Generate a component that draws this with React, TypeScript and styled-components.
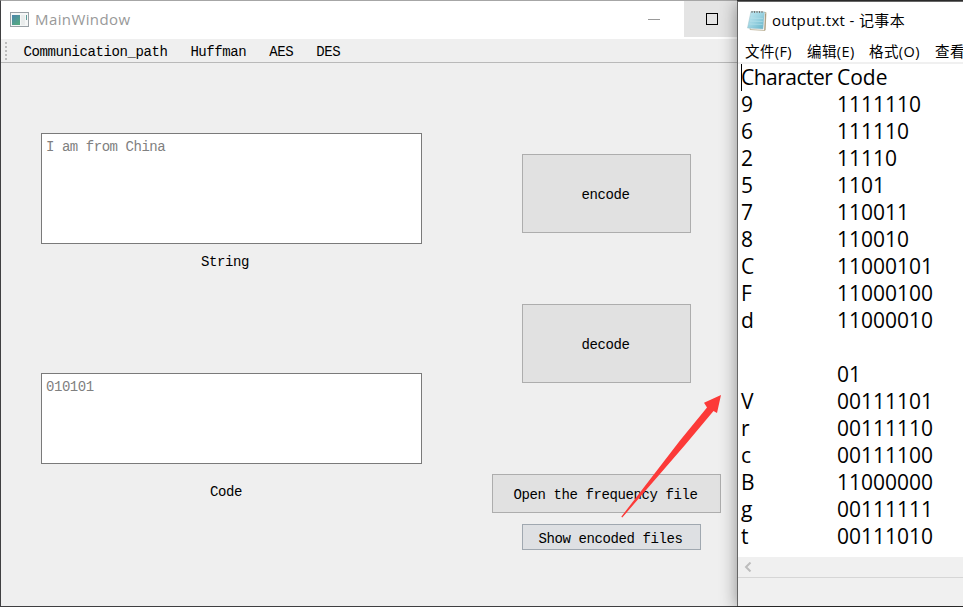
import React from "react";
import styled, { createGlobalStyle } from "styled-components";

const GlobalStyle = createGlobalStyle`
  * { box-sizing: border-box; }
  body { margin: 0; background: #333; overflow: hidden; }
`;

const mono = `"Liberation Mono", "Noto Sans CJK SC", monospace`;
const sans = `"Open Sans", "Noto Sans CJK SC", sans-serif`;

const Desktop = styled.div`
  display: flex;
  width: 963px;
  height: 607px;
  overflow: hidden;
`;

const MainWindow = styled.section`
  display: flex;
  flex-direction: column;
  width: 737px;
  height: 607px;
  flex: none;
  position: relative;
  background: #efefef;
  border: 1px solid #3f3f41;
  border-top-color: #a6a6a6;
  border-right: 0;
`;

const TitleBar = styled.header`
  display: flex;
  align-items: center;
  height: 38px;
  flex: none;
  padding-left: 9px;
  background: #fff;
  color: #999;
  font: 15px/38px ${sans};
`;

const Title = styled.span`
  margin: -2px auto 0 5px;
  letter-spacing: 0.4px;
`;

const Caption = styled.div<{ $active?: boolean }>`
  display: flex;
  align-items: center;
  justify-content: center;
  align-self: flex-start;
  width: ${(p) => (p.$active ? 53 : 60)}px;
  height: 36px;
  padding-left: ${(p) => (p.$active ? 2 : 0)}px;
  background: ${(p) => (p.$active ? "#e4e4e4" : "#fff")};
`;

const MenuBar = styled.nav`
  display: flex;
  align-items: center;
  height: 24px;
  flex: none;
  border-bottom: 1px solid #b9b9b9;
  font: 14px/16px ${mono};
  letter-spacing: -0.402px;
`;

const Grip = styled.span`
  width: 2px;
  height: 18px;
  margin: 1px 16px 0 4px;
  background: repeating-linear-gradient(#bcbcbc 0 2px, transparent 2px 4px);
`;

const MenuItem = styled.span`
  margin: 2px 22.6px 0 0.4px;
`;

const Body = styled.main`
  display: flex;
  flex: 1;
  min-height: 0;
  padding-left: 40px;
`;

const Fields = styled.div`
  display: flex;
  flex-direction: column;
  width: 381px;
  padding-top: 70px;
`;

const TextBox = styled.div<{ $h: number }>`
  height: ${(p) => p.$h}px;
  padding: 5px 4px 4px;
  border: 1px solid #7a7a7a;
  background: #fff;
  color: #808080;
  font: 14px/16px ${mono};
  letter-spacing: -0.45px;
`;

const Label = styled.div<{ $top: number; $bottom?: number; $left: number }>`
  margin: ${(p) => p.$top}px 0 ${(p) => p.$bottom ?? 0}px ${(p) => p.$left}px;
  font: 14px/16px ${mono};
  letter-spacing: -0.402px;
`;

const Actions = styled.div`
  display: flex;
  flex-direction: column;
  padding: 91px 0 0 100px;
`;

const Button = styled.button<{ $w: number; $h: number; $left?: number; $gap?: number; $hot?: boolean }>`
  width: ${(p) => p.$w}px;
  height: ${(p) => p.$h}px;
  flex: none;
  margin: 0 0 ${(p) => p.$gap ?? 0}px ${(p) => p.$left ?? 0}px;
  padding: ${(p) => (p.$hot ? 4 : 2)}px 2px 0 0;
  border: 1px solid ${(p) => (p.$hot ? "#a0a8b0" : "#adadad")};
  background: ${(p) => (p.$hot ? "#dee0e3" : "#e1e1e1")};
  color: #000;
  font: 14px/16px ${mono};
  letter-spacing: -0.402px;
`;

const Arrow = styled.svg`
  position: absolute;
  left: 619px;
  top: 392px;
  z-index: 1;
`;

const Notepad = styled.section`
  display: flex;
  flex-direction: column;
  position: relative;
  z-index: 2;
  width: 226px;
  height: 605px;
  margin-top: 1px;
  flex: none;
  background: #fff;
  border-left: 1px solid #666;
  border-top: 1px solid #666;
  box-shadow: 0 2px 16px rgba(0, 0, 0, 0.42);
  color: #000;
`;

const NoteTitle = styled.header`
  display: flex;
  align-items: center;
  height: 37px;
  flex: none;
  padding-left: 9px;
  gap: 5px;
  font: 15px/36px ${sans};
  letter-spacing: 0.35px;
  white-space: nowrap;
`;

const NoteName = styled.span`
  margin-top: -2px;
`;

const NoteMenu = styled.nav`
  display: flex;
  height: 25px;
  flex: none;
  padding: 2px 0 0 7px;
  gap: 14px;
  overflow: hidden;
  border-bottom: 2px solid #f0f0f0;
  font: 14.5px/21px ${sans};
  white-space: nowrap;
`;

const NoteMenuItem = styled.span<{ $w: number }>`
  flex: none;
  width: ${(p) => p.$w}px;
  letter-spacing: 0.4px;
`;

const Document = styled.div`
  flex: 1;
  min-height: 0;
  padding-left: 3px;
  overflow: hidden;
  font: 21px/27px ${sans};
`;

const Line = styled.div`
  display: grid;
  grid-template-columns: 96px 1fr;
  height: 27px;
  white-space: nowrap;
`;

const Symbol = styled.span<{ $caret?: boolean }>`
  border-left: ${(p) => (p.$caret ? "1px solid #000" : "0")};
  text-indent: ${(p) => (p.$caret ? "-1px" : "0")};
  letter-spacing: ${(p) => (p.$caret ? "-0.5px" : "0")};
`;

const ScrollBar = styled.div`
  display: flex;
  align-items: center;
  height: 21px;
  flex: none;
  padding-left: 5px;
  background: #f0f0f0;
  border-bottom: 1px solid #d6d6d6;
`;

const StatusBar = styled.footer`
  height: 28px;
  flex: none;
  background: #f0f0f0;
`;

const lines: [string, string][] = [
  ["Character", "Code"],
  ["9", "1111110"],
  ["6", "111110"],
  ["2", "11110"],
  ["5", "1101"],
  ["7", "110011"],
  ["8", "110010"],
  ["C", "11000101"],
  ["F", "11000100"],
  ["d", "11000010"],
  ["", ""],
  ["", "01"],
  ["V", "00111101"],
  ["r", "00111110"],
  ["c", "00111100"],
  ["B", "11000000"],
  ["g", "00111111"],
  ["t", "00111010"],
];

const AppIcon = () => (
  <svg width="20" height="16" viewBox="0 0 20 16">
    <defs>
      <linearGradient id="pane" x1="0" y1="0" x2="0.6" y2="1">
        <stop offset="0" stopColor="#4b84ad" />
        <stop offset="1" stopColor="#54a883" />
      </linearGradient>
    </defs>
    <rect x="0.5" y="0.5" width="18" height="14" fill="#f5f7f7" stroke="#9aa1a6" />
    <rect x="2" y="3" width="8" height="10" fill="url(#pane)" />
    <rect x="11" y="3" width="4" height="10" fill="#e9ecec" />
    <rect x="16" y="3" width="1" height="5" fill="#5d9c98" />
  </svg>
);

const NotepadIcon = () => (
  <svg width="20" height="22" viewBox="0 0 20 22">
    <defs>
      <linearGradient id="sheet" x1="0" y1="0" x2="1" y2="1">
        <stop offset="0" stopColor="#c5e9f2" />
        <stop offset="0.5" stopColor="#9bd3e1" />
        <stop offset="1" stopColor="#62b2c8" />
      </linearGradient>
    </defs>
    <path d="M5 1.5 19 2.5 18 20.5 3 19.5Z" fill="#fff" stroke="#b5a98b" strokeWidth="0.8" />
    <path d="M4 1.5 17.5 2 16 19 0.5 18Z" fill="url(#sheet)" stroke="#9fc3cc" strokeWidth="0.5" />
    <path d="M3.5 8 16 8.5M3 11 15.7 11.5M2.5 14 15.5 14.5" stroke="#c2e6ee" strokeWidth="0.5" />
    <path d="M5 1V3M7.5 1V3M10 1V3M12.5 1V3M15 1V3" stroke="#777" strokeWidth="1" />
    <path d="M18.5 3.5 17.8 20" stroke="#a7987a" strokeWidth="1" />
  </svg>
);

export default function App() {
  return (
    <Desktop>
      <GlobalStyle />
      <MainWindow>
        <TitleBar>
          <AppIcon />
          <Title>MainWindow</Title>
          <Caption>
            <svg width="12" height="1"><rect width="12" height="1" fill="#999" /></svg>
          </Caption>
          <Caption $active>
            <svg width="12" height="12">
              <rect x="0.5" y="0.5" width="11" height="11" fill="none" stroke="#000" />
            </svg>
          </Caption>
        </TitleBar>
        <MenuBar>
          <Grip />
          <MenuItem>Communication_path</MenuItem>
          <MenuItem>Huffman</MenuItem>
          <MenuItem>AES</MenuItem>
          <MenuItem>DES</MenuItem>
        </MenuBar>
        <Body>
          <Fields>
            <TextBox $h={111}>I am from China</TextBox>
            <Label $top={10} $bottom={103} $left={160}>String</Label>
            <TextBox $h={91}>010101</TextBox>
            <Label $top={20} $left={169}>Code</Label>
          </Fields>
          <Actions>
            <Button $w={169} $h={79} $gap={71}>encode</Button>
            <Button $w={169} $h={79} $gap={91}>decode</Button>
            <Button $w={229} $h={39} $gap={11} $left={-30}>Open the frequency file</Button>
            <Button $w={179} $h={26} $hot>Show encoded files</Button>
          </Actions>
        </Body>
        <Arrow width="104" height="128" viewBox="620 393 104 128">
          <path d="M621.3 516.7 680 440.5 707 407.5 704 402.7 721 395 717 413 713.5 411 685 445 622.3 517.5Z" fill="#fc3a38" />
        </Arrow>
      </MainWindow>
      <Notepad>
        <NoteTitle>
          <NotepadIcon />
          <NoteName>output.txt - 记事本</NoteName>
        </NoteTitle>
        <NoteMenu>
          <NoteMenuItem $w={48}>文件(F)</NoteMenuItem>
          <NoteMenuItem $w={48}>编辑(E)</NoteMenuItem>
          <NoteMenuItem $w={52}>格式(O)</NoteMenuItem>
          <NoteMenuItem $w={48}>查看</NoteMenuItem>
        </NoteMenu>
        <Document>
          {lines.map(([symbol, code], i) => (
            <Line key={i}>
              <Symbol $caret={i === 0}>{symbol}</Symbol>
              <span>{code}</span>
            </Line>
          ))}
        </Document>
        <ScrollBar>
          <svg width="9" height="10"><path d="M7.5 0.5 3 5 7.5 9.5" fill="none" stroke="#bdbdbd" strokeWidth="2" /></svg>
        </ScrollBar>
        <StatusBar />
      </Notepad>
    </Desktop>
  );
}
